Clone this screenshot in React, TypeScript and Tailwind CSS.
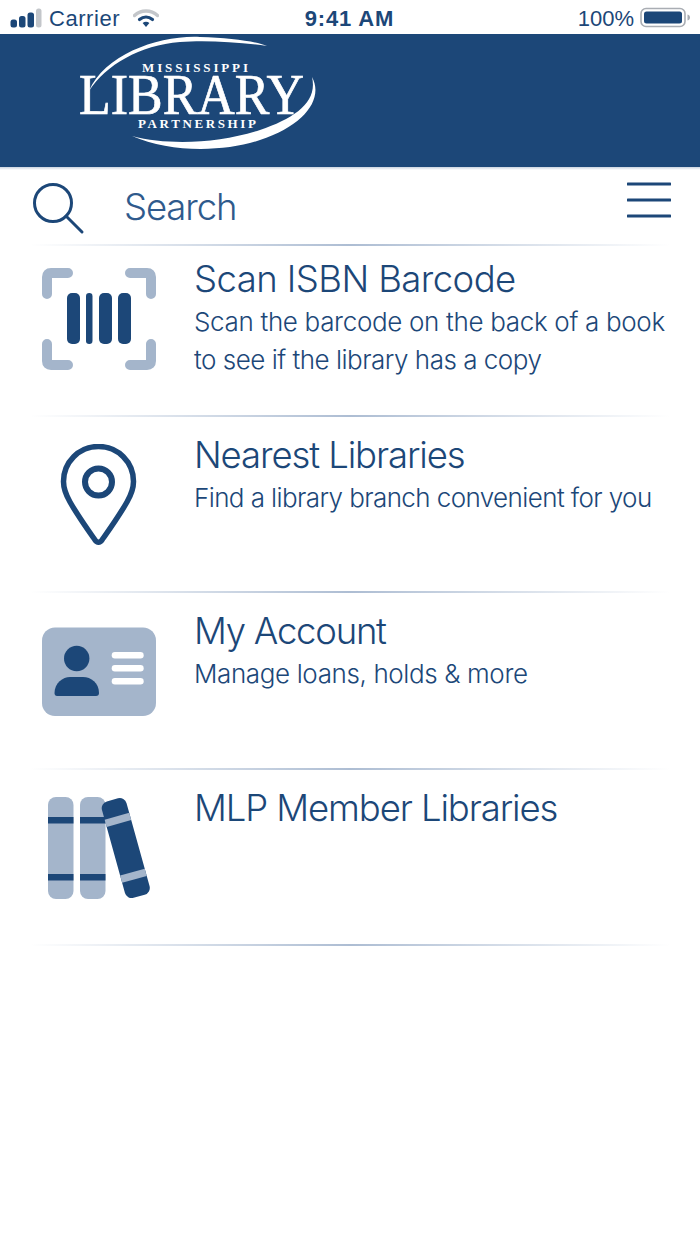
const DARK = '#1c4778';
const LIGHT = '#a4b5cb';

function Signal() {
  return (
    <svg width="32" height="20" viewBox="0 0 32 20">
      <rect x="0.5" y="11.5" width="6.5" height="8" rx="2.5" fill={DARK} />
      <rect x="9" y="8" width="6.5" height="11.5" rx="2.5" fill={DARK} />
      <rect x="17.5" y="4.5" width="6.5" height="15" rx="2.5" fill={DARK} />
      <rect x="26" y="0.5" width="5.5" height="19" rx="2.5" fill="#c3c6ca" />
    </svg>
  );
}

function Wifi() {
  return (
    <svg width="26" height="19" viewBox="0 0 26 19">
      <path d="M1.5 6.5 C8 0.5 18 0.5 24.5 6.5" fill="none" stroke="#c3c6ca" strokeWidth="3.4" strokeLinecap="round" />
      <path d="M6.5 10.5 C10.5 7.2 15.5 7.2 19.5 10.5" fill="none" stroke={DARK} strokeWidth="3.2" strokeLinecap="round" />
      <path d="M9.6 14 C11.6 12.4 14.4 12.4 16.4 14 L13 18 Z" fill={DARK} />
    </svg>
  );
}

function Battery() {
  return (
    <svg width="51" height="22" viewBox="0 0 51 22">
      <rect x="1" y="1.5" width="44" height="18" rx="5" fill="none" stroke="#a9adb3" strokeWidth="1.6" />
      <rect x="4" y="4.5" width="38" height="12" rx="2.5" fill={DARK} />
      <path d="M47.5 7.5 C49.5 8 50 9.5 50 10.5 C50 11.5 49.5 13 47.5 13.5 Z" fill="#a9adb3" />
    </svg>
  );
}

function Logo() {
  return (
    <svg width="260" height="133" viewBox="0 0 260 133">
      <path d="M19 57 C35 20 90 1 130 3 C160 4 185 7 197 12 C170 8 135 6 110 8 C70 11 36 31 19 57 Z" fill="#fff" />
      <path d="M242 43 C254 65 234 92 190 106 C155 118 100 119 62 102 C100 112 150 109 190 96 C225 84 248 68 242 43 Z" fill="#fff" />
      <g fill="#fff" fontFamily="'Liberation Serif', serif">
        <text x="72" y="38" fontSize="13" fontWeight="700" textLength="106" lengthAdjust="spacing">MISSISSIPPI</text>
        <text x="9" y="80" fontSize="56" stroke="#fff" strokeWidth="0.7" textLength="225" lengthAdjust="spacingAndGlyphs">LIBRARY</text>
        <text x="68" y="94" fontSize="13" fontWeight="700" textLength="118" lengthAdjust="spacing">PARTNERSHIP</text>
      </g>
    </svg>
  );
}

function SearchIcon() {
  return (
    <svg width="52" height="52" viewBox="0 0 52 52" className="mt-[4px] shrink-0">
      <circle cx="20" cy="20" r="18.5" fill="none" stroke={DARK} strokeWidth="3" />
      <path d="M33 33 L49 49" stroke={DARK} strokeWidth="3" strokeLinecap="round" />
    </svg>
  );
}

function MenuIcon() {
  return (
    <svg width="44" height="36" viewBox="0 0 44 36" className="mb-[14px] shrink-0">
      <path d="M1 2 H43 M1 18 H43 M1 34 H43" stroke={DARK} strokeWidth="3" strokeLinecap="round" />
    </svg>
  );
}

function BarcodeIcon() {
  return (
    <svg width="114" height="102" viewBox="0 0 114 102">
      <g fill="none" stroke={LIGHT} strokeWidth="10" strokeLinecap="round" strokeLinejoin="round">
        <path d="M5 26 V9 Q5 5 9 5 H26" />
        <path d="M88 5 H105 Q109 5 109 9 V26" />
        <path d="M5 76 V93 Q5 97 9 97 H26" />
        <path d="M88 97 H105 Q109 97 109 93 V76" />
      </g>
      <g fill={DARK}>
        <rect x="25" y="25" width="13" height="51" rx="5" />
        <rect x="44" y="25" width="6.5" height="51" rx="3.2" />
        <rect x="57" y="25" width="13" height="51" rx="5" />
        <rect x="76" y="25" width="13" height="51" rx="5" />
      </g>
    </svg>
  );
}

function PinIcon() {
  return (
    <svg width="114" height="102" viewBox="0 0 114 102">
      <path
        d="M56.5 2.5 C37 2.5 21.5 18 21.5 37.5 C21.5 45 24 51 28 58 C36 72 46 86 53 96 C55 99 58 99 60 96 C67 86 77 72 85 58 C89 51 91.5 45 91.5 37.5 C91.5 18 76 2.5 56.5 2.5 Z"
        fill="none"
        stroke={DARK}
        strokeWidth="5.5"
        strokeLinejoin="round"
      />
      <circle cx="56.5" cy="38" r="13.5" fill="none" stroke={DARK} strokeWidth="6" />
    </svg>
  );
}

function CardIcon() {
  return (
    <svg width="114" height="90" viewBox="0 0 114 90">
      <rect x="0" y="0.5" width="114" height="88.5" rx="13" fill={LIGHT} />
      <circle cx="34.7" cy="31.5" r="12.7" fill={DARK} />
      <path d="M12.5 66 C12.5 56 21 50 28 50 H41 C49 50 57 56 57 66 C57 68 56 69 54 69 H15 C13.5 69 12.5 68 12.5 66 Z" fill={DARK} />
      <rect x="69.7" y="25" width="32" height="6.5" rx="3.2" fill="#fff" />
      <rect x="69.7" y="38" width="32" height="6.5" rx="3.2" fill="#fff" />
      <rect x="69.7" y="51" width="32" height="6.5" rx="3.2" fill="#fff" />
    </svg>
  );
}

function BooksIcon() {
  return (
    <svg width="114" height="104" viewBox="0 0 114 104">
      <rect x="6" y="0" width="25.5" height="102" rx="8" fill={LIGHT} />
      <rect x="38" y="0" width="25.5" height="102" rx="8" fill={LIGHT} />
      <path d="M6 20 H31.5 V26.5 H6 Z M6 77 H31.5 V83.5 H6 Z M38 20 H63.5 V26.5 H38 Z M38 77 H63.5 V83.5 H38 Z" fill={DARK} />
      <g transform="rotate(-15.5 84 51)">
        <rect x="71" y="1" width="25.5" height="100" rx="7" fill={DARK} />
        <rect x="71" y="18" width="25.5" height="7.5" fill={LIGHT} />
        <rect x="71" y="76" width="25.5" height="7.5" fill={LIGHT} />
      </g>
    </svg>
  );
}

function Divider() {
  return <div className="mx-[30px] h-[2px] bg-linear-to-r from-transparent via-[#adbdd3] to-transparent" />;
}

type RowProps = {
  icon: React.ReactNode;
  title: React.ReactNode;
  children?: React.ReactNode;
  rowClass: string;
  iconClass: string;
};

function MenuRow({ icon, title, children, rowClass, iconClass }: RowProps) {
  return (
    <div className={`flex ${rowClass}`}>
      <div className={`w-[194px] shrink-0 pl-[42px] ${iconClass}`}>{icon}</div>
      <div>
        {title}
        <div className="mt-[2px] text-[26px] font-light leading-[38px] text-[#1c4778]">{children}</div>
      </div>
    </div>
  );
}

const titleClass = 'whitespace-nowrap text-[36.5px] font-light leading-[44px] text-[#1c4778]';

export default function App() {
  return (
    <div className="h-[1244px] w-[700px] overflow-hidden bg-white font-['Inter',sans-serif]">
      {/* Status bar */}
      <div className="flex h-[34px] items-center justify-between pl-[10px] pr-[9px] pt-[2px] text-[22px] text-[#1c4778]">
        <div className="flex w-[250px] items-center gap-[7px]">
          <Signal />
          <span className="font-['Liberation_Sans',sans-serif] tracking-[0.55px]">Carrier</span>
          <span className="ml-[6px]">
            <Wifi />
          </span>
        </div>
        <span className="mr-[2px] font-['Liberation_Sans',sans-serif] text-[22px] font-bold tracking-[0.85px]">9:41 AM</span>
        <div className="flex w-[250px] items-center justify-end gap-[6px]">
          <span className="font-['Liberation_Sans',sans-serif]">100%</span>
          <Battery />
        </div>
      </div>

      {/* Header */}
      <header className="h-[133px] bg-[#1c4778] pl-[70px]">
        <Logo />
      </header>
      <div className="h-[3px] bg-linear-to-b from-[#c9d3e0] to-white" />

      {/* Search */}
      <div className="flex h-[74px] items-center pl-[33px] pr-[29px]">
        <SearchIcon />
        <span className="ml-[39px] flex-1 text-[36.5px] font-light tracking-[-1.1px] text-[#2f5a8c]">Search</span>
        <MenuIcon />
      </div>
      <Divider />

      <MenuRow
        icon={<BarcodeIcon />}
        title={<h2 className={`${titleClass} tracking-[-0.57px]`}>Scan ISBN Barcode</h2>}
        rowClass="h-[169px] pt-[11px]"
        iconClass="pt-[11px]"
      >
        <p className="tracking-[-0.33px]">Scan the barcode on the back of a book</p>
        <p className="tracking-[-0.5px]">to see if the library has a copy</p>
      </MenuRow>
      <Divider />
      <MenuRow
        icon={<PinIcon />}
        title={<h2 className={`${titleClass} tracking-[-1.1px]`}>Nearest Libraries</h2>}
        rowClass="h-[174px] pt-[16px]"
        iconClass="pt-[11px]"
      >
        <p className="tracking-[-0.6px]">Find a library branch convenient for you</p>
      </MenuRow>
      <Divider />
      <MenuRow
        icon={<CardIcon />}
        title={<h2 className={`${titleClass} tracking-[-1.25px]`}>My Account</h2>}
        rowClass="h-[175px] pt-[16px]"
        iconClass="pt-[18px]"
      >
        <p className="tracking-[-0.38px]">Manage loans, holds &amp; more</p>
      </MenuRow>
      <Divider />
      <MenuRow
        icon={<BooksIcon />}
        title={<h2 className={`${titleClass} tracking-[-1.1px]`}>MLP Member Libraries</h2>}
        rowClass="h-[174px] pt-[16px]"
        iconClass="pt-[11px]"
      />
      <Divider />
    </div>
  );
}
